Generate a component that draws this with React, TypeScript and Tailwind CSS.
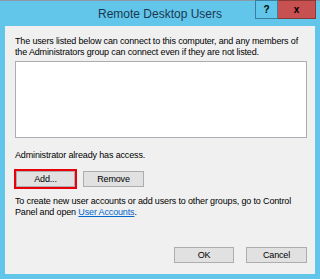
export default function App() {
  return (
    <div
      className="flex h-[279px] w-[320px] flex-col border-t border-[#8a9aa6] bg-[#62c6ea] text-black"
      style={{ fontFamily: '"Liberation Sans", Arial, sans-serif' }}
    >
      {/* title bar */}
      <div className="relative flex h-[25px] items-center justify-center">
        <span className="text-[12px] leading-none text-[#1c3850]">Remote Desktop Users</span>
        <div className="absolute top-[-1px] right-[4px] flex h-[19px]">
          <div className="flex w-[23px] items-center justify-center border border-[#3a7ea0] bg-[#62c6ea] text-[10px] font-bold">
            ?
          </div>
          <div className="flex w-[38px] items-center justify-center border border-l-0 border-[#8a3a34] bg-[#c75050] text-[10px] font-bold">
            x
          </div>
        </div>
      </div>

      {/* client area */}
      <div className="mx-[5px] mb-[5px] flex flex-1 flex-col bg-[#f0f0f0] pr-[8px] pl-[10px] text-[9px] leading-[11px] tracking-[-0.15px]">
        <p className="mt-[10px]">
          The users listed below can connect to this computer, and any members of the Administrators group can
          connect even if they are not listed.
        </p>
        <div className="mt-[3px] h-[77px] border border-[#abadb3] bg-white" />
        <p className="mt-[12px]">Administrator already has access.</p>

        <div className="mt-[8px] ml-[-1px] flex items-center gap-[6px]">
          <div className="border-2 border-[#e8000b]">
            <button className="flex h-[16px] w-[59px] items-center justify-center border border-[#adadad] bg-[#e1e1e1]">
              Add...
            </button>
          </div>
          <button className="flex h-[16px] w-[61px] items-center justify-center border border-[#adadad] bg-[#e1e1e1]">
            Remove
          </button>
        </div>

        <p className="mt-[7px]">
          To create new user accounts or add users to other groups, go to Control Panel and open{' '}
          <a className="text-[#0066cc] underline">User Accounts</a>.
        </p>

        <div className="mt-auto mb-[11px] flex justify-end gap-[12px]">
          <button className="flex h-[16px] w-[60px] items-center justify-center border border-[#adadad] bg-[#e1e1e1]">
            OK
          </button>
          <button className="flex h-[16px] w-[61px] items-center justify-center border border-[#adadad] bg-[#e1e1e1]">
            Cancel
          </button>
        </div>
      </div>
    </div>
  )
}
